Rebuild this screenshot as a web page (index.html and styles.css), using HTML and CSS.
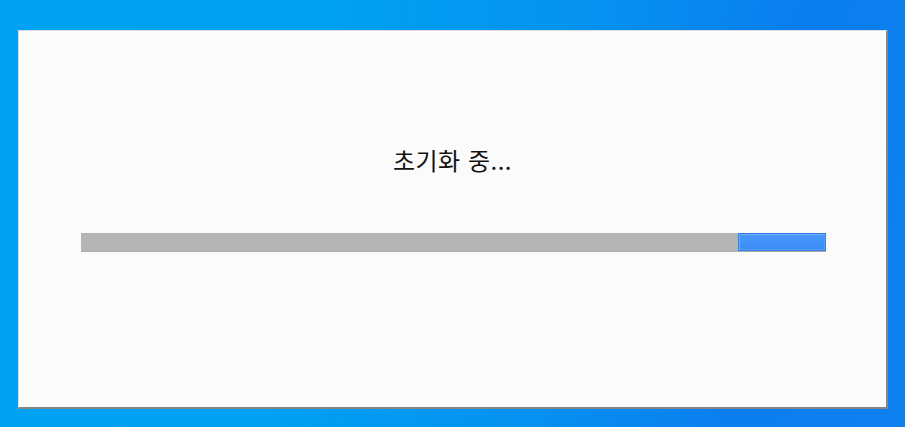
FILE: index.html
```html
<!DOCTYPE html>
<html lang="ko">
<head>
<meta charset="utf-8">
<title>초기화 중</title>
<link rel="stylesheet" href="styles.css">
</head>
<body>
<div class="desktop">
  <div class="window">
    <div class="status">초기화 중...</div>
    <div class="track">
      <div class="fill"></div>
      <div class="chunk"></div>
    </div>
  </div>
</div>
</body>
</html>
```
FILE: styles.css
```css
html, body {
  margin: 0;
  padding: 0;
  width: 905px;
  height: 427px;
  overflow: hidden;
}
.desktop {
  width: 905px;
  height: 427px;
  box-sizing: border-box;
  padding: 30px 0 0 18px;
  background: linear-gradient(100deg, #00a3f3 0%, #00a0f2 35%, #0691f0 62%, #0a7eef 82%, #0f80f0 100%);
}
.window {
  width: 870px;
  height: 379px;
  box-sizing: border-box;
  background: #fbfbfb;
  border-style: solid;
  border-width: 1px 2px 2px 1px;
  border-color: #dcdcdc #858585 #858585 #dcdcdc;
  box-shadow: inset 1px 1px 0 #ffffff;
  padding: 114px 60px 0 62px;
  display: flex;
  flex-direction: column;
}
.status {
  font-family: "Noto Sans CJK KR", "Noto Sans", sans-serif;
  font-size: 24px;
  line-height: 30px;
  letter-spacing: 0.5px;
  color: #141414;
  text-align: center;
  padding-right: 2px;
}
.track {
  margin-top: 58px;
  height: 18px;
  display: flex;
  background: #b5b5b5;
  border-bottom: 1px solid #adadad;
}
.fill {
  flex: 1;
}
.chunk {
  width: 88px;
  height: 18px;
  box-sizing: border-box;
  margin-left: 1px;
  border: 1px solid #2f7fe8;
  box-shadow: inset 1px 1px 0 #6aaaf8, inset -1px -1px 0 #5a9ef6;
  background: linear-gradient(#4a98fb, #3c8cf7);
}
```
